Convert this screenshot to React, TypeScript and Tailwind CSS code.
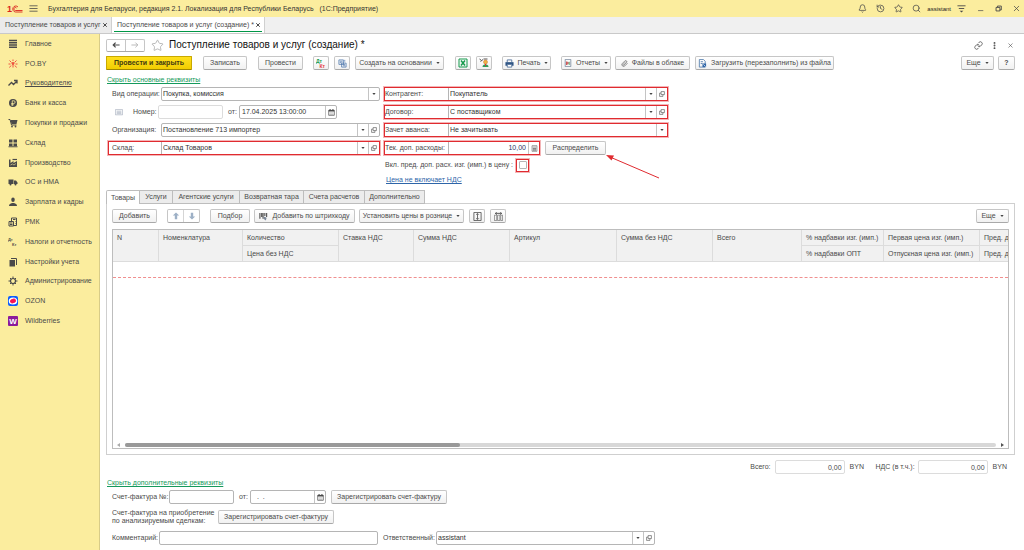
import React from 'react';
import { Bell, History, Link, MoreVertical, Paperclip, Search, Star, X } from 'lucide-react';

type SidebarItem = { title: string; icon: React.ReactNode; active?: boolean };

const Glyph: React.FC<{ children: React.ReactNode; className?: string }> = ({ children, className = 'size-[10px]' }) => (
  <svg viewBox="0 0 20 20" className={`${className} shrink-0`} fill="none" stroke="currentColor" strokeWidth="2" aria-hidden="true">
    {children}
  </svg>
);

const sidebarItems: SidebarItem[] = [
  { title: 'Главное', icon: <Glyph><path d="M2 3h16M2 7.500h16M2 12h16M2 16.500h16" strokeWidth="2.800" /></Glyph> },
  {
    title: 'PO.BY',
    icon: (
      <Glyph>
        <g stroke="#ee5340" strokeWidth="2">
          <path d="M10 7v10M10 1v3M1 10h4M15 10h4M3 3l4 4M17 3l-4 4M3 17l3-4M17 17l-3-4" />
          <circle cx="10" cy="9" r="2" fill="#ee5340" />
        </g>
      </Glyph>
    ),
  },
  { title: 'Руководителю', active: true, icon: <Glyph><path d="M1 15l6-6 4 4 7-7M12 5h6v6" strokeWidth="2.600" /></Glyph> },
  {
    title: 'Банк и касса',
    icon: (
      <Glyph>
        <circle cx="10" cy="10" r="8" fill="currentColor" stroke="none" />
        <path d="M8.500 16V5.500h3a2.500 2.500 0 0 1 0 5.500H6.500M6.500 13.500h5" stroke="#fbed9e" strokeWidth="1.600" />
      </Glyph>
    ),
  },
  {
    title: 'Покупки и продажи',
    icon: (
      <Glyph>
        <path d="M1 3h3l3 11h10" />
        <path d="M5 4h14l-2 8H7z" fill="currentColor" stroke="none" />
        <circle cx="8" cy="17" r="1.800" fill="currentColor" stroke="none" />
        <circle cx="15" cy="17" r="1.800" fill="currentColor" stroke="none" />
      </Glyph>
    ),
  },
  {
    title: 'Склад',
    icon: (
      <Glyph>
        <path d="M2 3h7v6H2zM11 3h7v6h-7zM2 11h7v5H2zM11 11h7v5h-7z" fill="currentColor" stroke="none" />
        <path d="M1 17.500h18" />
      </Glyph>
    ),
  },
  {
    title: 'Производство',
    icon: (
      <Glyph>
        <path d="M2 18V3h3v7l6-4v4l7-4v12z" fill="currentColor" stroke="none" />
        <path d="M9 3h9" strokeWidth="2.400" />
        <path d="M5 14l4-2 3 2 4-3" stroke="#fbed9e" strokeWidth="1.200" />
      </Glyph>
    ),
  },
  {
    title: 'ОС и НМА',
    icon: (
      <Glyph>
        <path d="M1 5h10v9H1zM12 7h4l3 4v3h-7z" fill="currentColor" stroke="none" />
        <circle cx="5" cy="15" r="2" fill="currentColor" stroke="none" />
        <circle cx="15" cy="15" r="2" fill="currentColor" stroke="none" />
      </Glyph>
    ),
  },
  {
    title: 'Зарплата и кадры',
    icon: (
      <Glyph>
        <ellipse cx="10" cy="5.500" rx="3.500" ry="4.500" fill="currentColor" stroke="none" />
        <path d="M2 18c0-4 3-5 6-6h4c3 1 6 2 6 6z" fill="currentColor" stroke="none" />
      </Glyph>
    ),
  },
  {
    title: 'РМК',
    icon: (
      <Glyph>
        <path d="M2 9h9v9H2zM7 8V2h10v15h-5M10 5h5M14 9h1M14 13h1M4 12h5M4 15h5" />
      </Glyph>
    ),
  },
  {
    title: 'Налоги и отчетность',
    icon: (
      <svg viewBox="0 0 20 20" className="size-[10px] shrink-0" fill="currentColor" aria-hidden="true">
        <text x="0" y="8" fontSize="8" fontWeight="bold">Дт</text>
        <text x="8" y="18" fontSize="8" fontWeight="bold">Кт</text>
      </svg>
    ),
  },
  {
    title: 'Настройки учета',
    icon: (
      <Glyph>
        <path d="M3 6h11v13H3z" fill="currentColor" stroke="none" />
        <path d="M6 3h11v13" />
      </Glyph>
    ),
  },
  {
    title: 'Администрирование',
    icon: (
      <Glyph>
        <circle cx="10" cy="10" r="5" strokeWidth="2.400" />
        <path d="M10 1v4M10 15v4M1 10h4M15 10h4M4 4l2.500 2.500M13.500 13.500L16 16M16 4l-2.500 2.500M4 16l2.500-2.500" />
      </Glyph>
    ),
  },
  {
    title: 'OZON',
    icon: (
      <Glyph>
        <rect width="20" height="20" rx="4" fill="#0a5cff" stroke="none" />
        <ellipse cx="10" cy="10" rx="8.500" ry="7" fill="#fff" stroke="none" />
        <ellipse cx="10" cy="10" rx="5" ry="3.500" fill="#f91155" stroke="#f91155" transform="rotate(-20 10 10)" />
      </Glyph>
    ),
  },
  {
    title: 'Wildberries',
    icon: (
      <svg viewBox="0 0 20 20" className="size-[10px] shrink-0" aria-hidden="true">
        <rect width="20" height="20" rx="2" fill="#8b1a9b" />
        <text x="10" y="16" fontSize="16" fontWeight="bold" fill="#fff" textAnchor="middle">W</text>
      </svg>
    ),
  },
];

const Caret = () => (
  <svg viewBox="0 0 8 5" className="h-[2px] w-[4px] shrink-0" aria-hidden="true">
    <path d="M0 0h8L4 5z" fill="#444" />
  </svg>
);

const OpenIcon = () => (
  <Glyph className="size-[6px]">
    <path d="M7 2h11v10H7zM7 7H2v11h11v-6" />
  </Glyph>
);

const CalendarIcon = () => (
  <Glyph className="size-[7px]">
    <path d="M2 4h16v14H2z" />
    <path d="M2 5h16M6 1v5M14 1v5" strokeWidth="4" />
    <path d="M5 11h10M5 15h10" strokeWidth="1" />
  </Glyph>
);

const CalcIcon = () => (
  <Glyph className="size-[7px]">
    <path d="M3 2h14v16H3zM5 6h10M5 10h10M5 14h10M8 9v8M12 9v8" strokeWidth="1.500" />
  </Glyph>
);

interface ButtonProps {
  children: React.ReactNode;
  className?: string;
  label?: string;
}

const Button: React.FC<ButtonProps> = ({ children, className = '', label }) => (
  <button
    type="button"
    aria-label={label}
    className={`flex h-[14px] shrink-0 items-center justify-center gap-1 whitespace-nowrap rounded-[2px] border border-[#c6c6c6] border-b-[#a9a9a9] bg-linear-to-b from-white to-[#f1f1f1] ${className}`}
  >
    {children}
  </button>
);

const SideButton: React.FC<{ children: React.ReactNode; label: string }> = ({ children, label }) => (
  <button type="button" aria-label={label} className="flex w-[11px] shrink-0 items-center justify-center border-l border-[#c4c4c4]">
    {children}
  </button>
);

interface SelectFieldProps {
  id: string;
  value: string;
  open?: boolean;
  bare?: boolean;
}

const SelectField: React.FC<SelectFieldProps> = ({ id, value, open, bare }) => (
  <div className={`flex min-w-0 flex-1 bg-white ${bare ? 'h-[12px] border-l border-[#b5b5b5]' : 'h-[14px] rounded-[2px] border border-[#b5b5b5]'}`}>
    <select id={id} className="min-w-0 flex-1 appearance-none px-[1px] text-[#333] outline-none">
      <option>{value}</option>
    </select>
    <span className="pointer-events-none flex w-[11px] shrink-0 items-center justify-center border-l border-[#c4c4c4]">
      <Caret />
    </span>
    {open && <SideButton label="Открыть"><OpenIcon /></SideButton>}
  </div>
);

const markedClass = 'border border-[#e02b30] ring-1 ring-[#e02b30]/35';

const MarkedField: React.FC<SelectFieldProps & { label: string }> = ({ label, ...field }) => (
  <div className={`flex h-[14px] items-center ${markedClass}`}>
    <label htmlFor={field.id} className="w-[63px] shrink-0 whitespace-nowrap">{label}</label>
    <SelectField {...field} bare />
  </div>
);

const DateField: React.FC<{ id: string; value: string; className: string }> = ({ id, value, className }) => (
  <div className={`flex h-[14px] rounded-[2px] border border-[#b5b5b5] ${className}`}>
    <input id={id} defaultValue={value} className="min-w-0 flex-1 px-[2px] text-[#333] outline-none" />
    <SideButton label="Выбрать дату"><CalendarIcon /></SideButton>
  </div>
);

const TopBar = () => (
  <header className="flex h-[17px] items-center bg-[#fbed9e] pl-[7px] pr-[3px]">
    <svg viewBox="0 0 32 20" className="h-[10px] w-[16px]" aria-label="1С">
      <text x="0" y="16" fontSize="18" fontWeight="bold" fill="#d9251d">1</text>
      <path d="M22 6a6 6 0 1 0-5 10h14M19 8a3 3 0 1 0-2 5h14" fill="none" stroke="#d9251d" strokeWidth="1.800" />
    </svg>
    <button type="button" aria-label="Меню" className="ml-[6px]">
      <Glyph className="size-[9px]"><path d="M1 4h18M1 10h18M1 16h18" strokeWidth="1.800" /></Glyph>
    </button>
    <span className="ml-[10px] flex-1 whitespace-pre text-[#333]">
      Бухгалтерия для Беларуси, редакция 2.1. Локализация для Республики Беларусь   (1С:Предприятие)
    </span>
    <div className="flex items-center">
      <button type="button" aria-label="Уведомления" className="mr-[9px]"><Bell size={9} /></button>
      <button type="button" aria-label="История" className="mr-[9px]"><History size={9} /></button>
      <button type="button" aria-label="Избранное" className="mr-[9px]"><Star size={9} /></button>
      <button type="button" aria-label="Поиск" className="mr-[6px]"><Search size={9} /></button>
      <span className="text-[6px] text-[#222]">assistant</span>
      <button type="button" aria-label="Настройки" className="ml-[6px]">
        <Glyph className="size-[9px]"><path d="M1 4h18M4 10h12" /><path d="M6 15h8l-4 4z" fill="currentColor" stroke="none" /></Glyph>
      </button>
      <button type="button" aria-label="Свернуть" className="ml-[11px]"><Glyph className="size-[7px]"><path d="M3 16h15" /></Glyph></button>
      <button type="button" aria-label="Развернуть" className="ml-[11px]">
        <Glyph className="size-[7px]"><path d="M3 7h11v10H3zM7 6V3h11v11h-4" strokeWidth="2.600" /></Glyph>
      </button>
      <button type="button" aria-label="Закрыть" className="ml-[10px]"><X size={9} /></button>
    </div>
  </header>
);

const WindowTabs = () => (
  <nav className="flex h-[17px] border-b border-[#c9c9c9] bg-[#f0f0f0]">
    <div className="flex w-[112px] items-center justify-between border-r border-[#d0d0d0] bg-[#ebebeb] pl-[5px] pr-[3px]">
      <button type="button" className="whitespace-nowrap">Поступление товаров и услуг</button>
      <button type="button" aria-label="Закрыть вкладку"><X size={6} strokeWidth={4} /></button>
    </div>
    <div className="flex w-[153px] border-r border-[#d0d0d0] bg-white px-[2px]">
      <div className="flex h-[15px] flex-1 items-center justify-between border-b border-[#009646] pl-[3px] pr-[1px] pt-[1px]">
        <button type="button" className="whitespace-nowrap">Поступление товаров и услуг (создание) *</button>
        <button type="button" aria-label="Закрыть вкладку"><X size={6} strokeWidth={4} /></button>
      </div>
    </div>
  </nav>
);

const Sidebar = () => (
  <aside className="w-[100px] shrink-0 border-r border-[#d8cc88] bg-[#fbed9e]">
    <ul className="flex h-[297px] flex-col">
      {sidebarItems.map((item) => (
        <li key={item.title} className="flex flex-1 items-center">
          <a href="#" className="flex items-center gap-[7px] whitespace-nowrap pl-[8px]">
            {item.icon}
            <span className={item.active ? 'underline' : ''}>{item.title}</span>
          </a>
        </li>
      ))}
    </ul>
  </aside>
);

const FormTitle = () => (
  <div className="flex h-[14px] items-center">
    <div className="flex h-[13px] w-[39px] rounded-[2px] border border-[#c6c6c6] border-b-[#a9a9a9]">
      <button type="button" aria-label="Назад" className="flex flex-1 items-center justify-center border-r border-[#c6c6c6]">
        <Glyph className="size-[8px]"><path d="M19 10H3M9 4l-6 6 6 6" strokeWidth="3" /></Glyph>
      </button>
      <button type="button" aria-label="Вперед" className="flex flex-1 items-center justify-center text-[#aaa]">
        <Glyph className="size-[8px]"><path d="M1 10h16M11 4l6 6-6 6" /></Glyph>
      </button>
    </div>
    <button type="button" aria-label="В избранное" className="ml-[6px] text-[#aaa]"><Star size={13} strokeWidth={1.5} /></button>
    <h1 className="ml-[5px] flex-1 whitespace-nowrap text-[10px] text-[#111]">Поступление товаров и услуг (создание) *</h1>
    <button type="button" aria-label="Ссылка"><Link size={9} /></button>
    <button type="button" aria-label="Еще действия" className="ml-[7px]"><MoreVertical size={9} strokeWidth={3} /></button>
    <button type="button" aria-label="Закрыть" className="ml-[8px] mr-[1px]"><X size={7} /></button>
  </div>
);

const CommandBar = () => (
  <div className="flex items-center">
    <button
      type="button"
      className="h-[14px] w-[86px] shrink-0 rounded-[1px] border border-[#c9a900] border-b-[#a08600] bg-linear-to-b from-[#ffe01c] to-[#f2cd00] font-bold text-[#443c10]"
    >
      Провести и закрыть
    </button>
    <Button className="ml-[11px] w-[44px]">Записать</Button>
    <Button className="ml-[11px] w-[45px]">Провести</Button>
    <Button className="ml-[10px] w-[16px]" label="Проводки">
      <svg viewBox="0 0 20 20" className="size-[10px]" fontWeight="bold" aria-hidden="true">
        <text x="0" y="9" fontSize="10" fill="#159a4c">Дт</text>
        <text x="7" y="19" fontSize="10" fill="#e33b3b">Кт</text>
      </svg>
    </Button>
    <Button className="ml-[5px] w-[16px] text-[#3c6aa5]" label="Структура подчиненности">
      <Glyph className="size-[9px]">
        <path d="M2 2h10v10H2zM8 9h10v9H8z" strokeWidth="1.500" />
        <path d="M4 5h6M4 8h4M11 12h5M11 15h5M15 2v4" strokeWidth="1.500" />
      </Glyph>
    </Button>
    <Button className="ml-[5px] w-[89px]">Создать на основании <Caret /></Button>
    <Button className="ml-[11px] w-[16px] text-[#159a4c]" label="Excel">
      <Glyph className="size-[10px]"><path d="M2 2h16v16H2z" /><path d="M6 5l8 10M14 5L6 15" strokeWidth="3" /></Glyph>
    </Button>
    <Button className="ml-[5px] w-[16px]" label="Проверка">
      <Glyph className="size-[10px]">
        <path d="M1 2l4 3M3 7l5-4M9 2h8" stroke="#555" />
        <circle cx="13" cy="8" r="4" fill="#f0b33f" stroke="#c56b34" strokeWidth="1" />
        <path d="M7 18c0-4 3-5 6-5s6 1 6 5z" fill="#2f9d58" stroke="none" />
        <path d="M13 12v4" stroke="#d33" />
      </Glyph>
    </Button>
    <Button className="ml-[10px] w-[49px]">
      <Glyph className="size-[9px]">
        <path d="M5 7V2h10v5" stroke="#54739c" />
        <path d="M1 7h18v8H1z" fill="#2e5483" stroke="none" />
        <path d="M5 12h10v6H5z" fill="#fff" stroke="#54739c" />
      </Glyph>
      Печать <Caret />
    </Button>
    <Button className="ml-[10px] w-[50px]">
      <Glyph className="size-[8px]">
        <path d="M3 1h14v18H3z" stroke="#75879b" />
        <path d="M7 6v9M7 10h6" stroke="#c43232" strokeWidth="3" />
        <path d="M13 7v8" stroke="#2f9d58" />
      </Glyph>
      Отчеты <Caret />
    </Button>
    <Button className="ml-[4px] w-[75px]"><Paperclip size={7} />Файлы в облаке</Button>
    <Button className="ml-[5px] w-[139px]">
      <Glyph className="size-[9px]">
        <path d="M3 1h9l4 4v13H3z" stroke="#5b83b1" />
        <path d="M6 6h5M6 10h4" stroke="#5b83b1" />
        <path d="M10 10h8v8h-8z" fill="#2f65a7" stroke="none" />
        <path d="M12 12l5 5" stroke="#fff" strokeWidth="1.500" />
      </Glyph>
      Загрузить (перезаполнить) из файла
    </Button>
    <Button className="ml-auto w-[33px]">Еще <Caret /></Button>
    <Button className="ml-[4px] w-[17px] font-bold">?</Button>
  </div>
);

const MainFields = () => (
  <div className="mt-[2px] flex items-start gap-[4px]">
    <div className="flex w-[274px] flex-col gap-[4px] pl-[2px]">
      <div className="flex h-[14px] items-center pl-[4px]">
        <label htmlFor="operation" className="w-[49px] shrink-0 whitespace-nowrap">Вид операции:</label>
        <SelectField id="operation" value="Покупка, комиссия" />
      </div>
      <div className="flex h-[14px] items-center pl-[4px]">
        <span className="ml-[3px] w-[18px] text-[#9aa5b5]">
          <Glyph className="size-[8px]"><path d="M1 4h18v13H1zM4 8h12M4 11h12M4 14h12" strokeWidth="1.500" /></Glyph>
        </span>
        <label htmlFor="number" className="w-[25px] shrink-0">Номер:</label>
        <input id="number" className="h-[14px] w-[65px] rounded-[2px] border border-[#dcdcdc] px-[2px] outline-none" />
        <label htmlFor="date" className="ml-[5px] w-[11px]">от:</label>
        <DateField id="date" value="17.04.2025 13:00:00" className="w-[98px]" />
      </div>
      <div className="flex h-[14px] items-center pl-[4px]">
        <label htmlFor="organization" className="w-[49px] shrink-0">Организация:</label>
        <SelectField id="organization" value="Постановление 713 импортер" open />
      </div>
      <div className={`flex h-[14px] items-center pl-[3px] ${markedClass}`}>
        <label htmlFor="warehouse" className="w-[49px] shrink-0">Склад:</label>
        <SelectField id="warehouse" value="Склад Товаров" open bare />
      </div>
    </div>

    <div className="flex w-[284px] flex-col gap-[4px]">
      <MarkedField id="partner" label="Контрагент:" value="Покупатель" open />
      <MarkedField id="contract" label="Договор:" value="С поставщиком" open />
      <MarkedField id="advance" label="Зачет аванса:" value="Не зачитывать" />
      <div className="flex h-[14px] items-center gap-[5px]">
        <div className={`flex h-[14px] w-[156px] items-center ${markedClass}`}>
          <label htmlFor="expenses" className="w-[63px] shrink-0 whitespace-nowrap">Тек. доп. расходы:</label>
          <div className="flex h-[12px] min-w-0 flex-1 border-l border-[#b5b5b5]">
            <input id="expenses" defaultValue="10,00" className="min-w-0 flex-1 px-[2px] text-right text-[#2a3565] outline-none" />
            <SideButton label="Калькулятор"><CalcIcon /></SideButton>
          </div>
        </div>
        <div className="relative">
          <Button className="w-[61px]">Распределить</Button>
          <svg viewBox="0 0 54 24" className="pointer-events-none absolute left-[61px] top-[14px] h-[24px] w-[54px]" aria-hidden="true">
            <path d="M53 23L4 2" stroke="#e02b30" fill="none" />
            <path d="M0 0l8 0.500-2.500 5z" fill="#e02b30" />
          </svg>
        </div>
      </div>
      <div className="flex h-[12px] items-center">
        <label htmlFor="in-price" className="w-[132px] shrink-0 whitespace-nowrap pl-[1px]">Вкл. пред. доп. расх. изг. (имп.) в цену :</label>
        <span className={`flex size-[13px] items-center justify-center ${markedClass}`}>
          <input id="in-price" type="checkbox" className="size-[8px] appearance-none rounded-[1px] border border-[#b5b5b5] bg-white" />
        </span>
      </div>
      <a href="#" className="self-start pl-[2px] leading-[10px] text-[#2e65a8] underline">Цена не включает НДС</a>
    </div>
  </div>
);

const sections = [
  { title: 'Товары', width: 'w-[34px]' },
  { title: 'Услуги', width: 'w-[33px]' },
  { title: 'Агентские услуги', width: 'w-[67px]' },
  { title: 'Возвратная тара', width: 'w-[64px]' },
  { title: 'Счета расчетов', width: 'w-[61px]' },
  { title: 'Дополнительно', width: 'w-[60px]' },
];

const SectionTabs = () => (
  <div role="tablist" className="flex h-[14px]">
    {sections.map((section, index) => (
      <button
        key={section.title}
        type="button"
        role="tab"
        aria-selected={index === 0}
        className={`${section.width} shrink-0 whitespace-nowrap border-t border-r border-[#bdbdbd] ${
          index === 0 ? 'rounded-tl-[2px] border-l bg-white' : 'border-b bg-[#ececec]'
        }`}
      >
        {section.title}
      </button>
    ))}
    <div className="flex-1 border-b border-[#cfcfcf]" />
  </div>
);

const TableToolbar = () => (
  <div className="flex items-center">
    <Button className="w-[45px]">Добавить</Button>
    <div className="ml-[10px] flex h-[14px] w-[33px] rounded-[2px] border border-[#c6c6c6] border-b-[#a9a9a9] text-[#9db0c6]">
      <button type="button" aria-label="Вверх" className="flex flex-1 items-center justify-center border-r border-[#d5d5d5]">
        <Glyph className="size-[8px]"><path d="M10 1l8 8h-5v9H7V9H2z" fill="currentColor" stroke="none" /></Glyph>
      </button>
      <button type="button" aria-label="Вниз" className="flex flex-1 items-center justify-center">
        <Glyph className="size-[8px]"><path d="M10 19l8-8h-5V2H7v9H2z" fill="currentColor" stroke="none" /></Glyph>
      </button>
    </div>
    <Button className="ml-[10px] w-[40px]">Подбор</Button>
    <Button className="ml-[4px] w-[101px]">
      <Glyph className="size-[9px]">
        <path d="M2 2v13M6 2v9M9 2v13M13 2v7M17 2v9" strokeWidth="2.400" />
        <path d="M11 10l6 3-2 6-5-4z" fill="#7a8798" stroke="none" />
      </Glyph>
      Добавить по штрихкоду
    </Button>
    <Button className="ml-[4px] w-[105px]">Установить цены в рознице <Caret /></Button>
    <Button className="ml-[5px] w-[16px]" label="Высота строк">
      <Glyph className="size-[9px]"><path d="M2 1h16v18H2zM10 4v12M7 6l3-3 3 3M7 14l3 3 3-3" strokeWidth="1.800" /></Glyph>
    </Button>
    <Button className="ml-[5px] w-[16px]" label="Ширина колонок">
      <Glyph className="size-[9px]">
        <path d="M1 7h5v12H1zM8 7h5v12H8zM15 7h4v12h-4z" strokeWidth="1.200" />
        <path d="M3 3h14M6 1L3 3l3 3M14 1l3 2-3 3" />
      </Glyph>
    </Button>
    <Button className="ml-auto w-[33px]">Еще <Caret /></Button>
  </div>
);

const headClass = 'overflow-hidden whitespace-nowrap border-r border-b border-[#dcdcdc] p-0 pl-[4px] text-left align-top font-normal leading-[15px]';

const GoodsTable = () => (
  <div className="mt-[6px] flex h-[220px] flex-col overflow-hidden border border-[#bdbdbd]">
    <table className="w-full table-fixed border-separate border-spacing-0">
      <colgroup>
        <col className="w-[46px]" />
        <col className="w-[84px]" />
        <col className="w-[96px]" />
        <col className="w-[75px]" />
        <col className="w-[96px]" />
        <col className="w-[107px]" />
        <col className="w-[96px]" />
        <col className="w-[89px]" />
        <col className="w-[82px]" />
        <col className="w-[96px]" />
        <col />
      </colgroup>
      <thead className="bg-[#f1f1f1]">
        <tr className="h-[16px]">
          <th rowSpan={2} className={headClass}>N</th>
          <th rowSpan={2} className={headClass}>Номенклатура</th>
          <th className={headClass}>Количество</th>
          <th rowSpan={2} className={headClass}>Ставка НДС</th>
          <th rowSpan={2} className={headClass}>Сумма НДС</th>
          <th rowSpan={2} className={headClass}>Артикул</th>
          <th rowSpan={2} className={headClass}>Сумма без НДС</th>
          <th rowSpan={2} className={headClass}>Всего</th>
          <th className={headClass}>% надбавки изг. (имп.)</th>
          <th className={headClass}>Первая цена изг. (имп.)</th>
          <th className={`${headClass} border-r-0`}>Пред. д</th>
        </tr>
        <tr className="h-[16px]">
          <th className={headClass}>Цена без НДС</th>
          <th className={headClass}>% надбавки ОПТ</th>
          <th className={headClass}>Отпускная цена изг. (имп.)</th>
          <th className={`${headClass} border-r-0`}>Пред. д</th>
        </tr>
      </thead>
      <tbody>
        <tr className="h-[16px]">
          <td colSpan={11} className="border-b border-dashed border-b-[#f08f8f] p-0" />
        </tr>
      </tbody>
    </table>
    <div className="mt-auto flex h-[6px] items-center gap-[5px] px-[4px]">
      <svg viewBox="0 0 3 4" className="h-[4px] w-[3px]" aria-hidden="true"><path d="M3 0v4L0 2z" fill="#aaa" /></svg>
      <div className="h-[4px] flex-1 rounded-full bg-[#d8d8d8]">
        <div className="h-[4px] w-5/13 rounded-full bg-[#999]" />
      </div>
      <svg viewBox="0 0 3 4" className="h-[4px] w-[3px]" aria-hidden="true"><path d="M0 0v4l3-2z" fill="#555" /></svg>
    </div>
  </div>
);

const Totals = () => (
  <div className="mt-[5px] flex items-center justify-end pr-[8px]">
    <label htmlFor="total" className="mr-[4px]">Всего:</label>
    <input id="total" defaultValue="0,00" readOnly className="h-[14px] w-[70px] rounded-[2px] border border-[#dcdcdc] px-[2px] text-right outline-none" />
    <span className="ml-[5px] w-[26px]">BYN</span>
    <label htmlFor="vat" className="mr-[3px]">НДС (в т.ч.):</label>
    <input id="vat" defaultValue="0,00" readOnly className="h-[14px] w-[70px] rounded-[2px] border border-[#dcdcdc] px-[2px] text-right outline-none" />
    <span className="ml-[5px]">BYN</span>
  </div>
);

const ExtraFields = () => (
  <div className="flex flex-col pl-[6px]">
    <div className="mt-[2px] flex items-center">
      <label htmlFor="invoice" className="w-[57px] whitespace-nowrap">Счет-фактура №:</label>
      <input id="invoice" className="h-[14px] w-[65px] rounded-[2px] border border-[#b5b5b5] px-[2px] outline-none" />
      <label htmlFor="invoice-date" className="ml-[5px] w-[11px]">от:</label>
      <DateField id="invoice-date" value="  .  ." className="w-[76px]" />
      <Button className="ml-[5px] w-[116px]">Зарегистрировать счет-фактуру</Button>
    </div>
    <div className="mt-[5px] flex items-center">
      <p className="w-[106px] leading-[8px]">
        Счет-фактура на приобретение
        <br />
        по анализируемым сделкам:
      </p>
      <Button className="w-[116px]">Зарегистрировать счет-фактуру</Button>
    </div>
    <div className="mt-[6px] flex items-center">
      <label htmlFor="comment" className="w-[47px]">Комментарий:</label>
      <input id="comment" className="h-[14px] w-[219px] rounded-[2px] border border-[#b5b5b5] px-[2px] outline-none" />
      <label htmlFor="responsible" className="ml-[5px] w-[53px] whitespace-nowrap">Ответственный:</label>
      <div className="flex w-[219px]">
        <SelectField id="responsible" value="assistant" open />
      </div>
    </div>
  </div>
);

const App: React.FC = () => {
  return (
    <div className="flex min-h-screen flex-col bg-white font-['Liberation_Sans',Arial,sans-serif] text-[7px] leading-[10px] text-[#4a4a4a]">
      <TopBar />
      <WindowTabs />
      <div className="flex flex-1">
        <Sidebar />
        <main className="min-w-0 flex-1 pl-[6px] pr-[9px] pt-[4px]">
          <FormTitle />
          <div className="mt-[4px]">
            <CommandBar />
          </div>
          <a href="#" className="mt-[5px] block w-fit pl-[1px] text-[#159a5c] underline">Скрыть основные реквизиты</a>
          <MainFields />
          <div className="mt-[5px]">
            <SectionTabs />
            <div className="border border-t-0 border-[#cfcfcf] px-[5px] pb-[5px] pt-[5px]">
              <TableToolbar />
              <GoodsTable />
            </div>
          </div>
          <Totals />
          <a href="#" className="mt-[4px] block w-fit pl-[1px] text-[#159a5c] underline">Скрыть дополнительные реквизиты</a>
          <ExtraFields />
        </main>
      </div>
    </div>
  );
};

export default App;
